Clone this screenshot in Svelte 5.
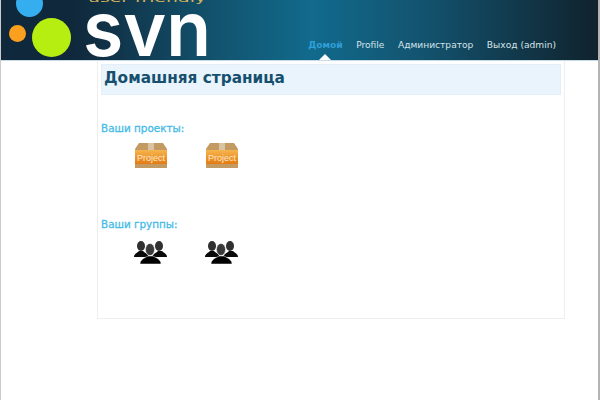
<script>
  const nav = [
    { label: 'Домой', active: true },
    { label: 'Profile' },
    { label: 'Администратор' },
    { label: 'Выход (admin)' }
  ];
  const sections = [
    { title: 'Ваши проекты:', kind: 'project' },
    { title: 'Ваши группы:', kind: 'group' }
  ];
</script>

<div class="page">
  <header>
    <svg class="logo" width="215" height="60" viewBox="0 0 215 60">
      <circle cx="28.5" cy="3.5" r="13.5" fill="#35aef0" />
      <circle cx="16.5" cy="33.5" r="8.5" fill="#fa9f1e" />
      <circle cx="50.5" cy="37.5" r="19.5" fill="#b7ee12" />
      <text class="tagline" x="87" y="2" textLength="118" lengthAdjust="spacingAndGlyphs">user friendly</text>
      <text class="svn" x="82" y="56" textLength="128" lengthAdjust="spacingAndGlyphs">svn</text>
    </svg>
    <nav>
      {#each nav as item}
        <a href="#top" class:active={item.active}>{item.label}</a>
      {/each}
    </nav>
  </header>

  <main>
    <div class="title"><h1>Домашняя страница</h1></div>

    {#each sections as section}
      <section>
        <h2>{section.title}</h2>
        <div class="icons {section.kind}">
          {#each [0, 1] as i (i)}
            <div class="icon">
              {#if section.kind === 'project'}
                <svg width="32" height="25" viewBox="0 0 32 25">
                  <defs>
                    <linearGradient id="band{i}" x1="0" y1="0" x2="0" y2="1">
                      <stop offset="0" stop-color="#f7b54e" />
                      <stop offset="1" stop-color="#e57a12" />
                    </linearGradient>
                  </defs>
                  <path d="M4 0h24l4 6v19H0V6z" fill="#c29a62" />
                  <path d="M13 0h6v7h-6z" fill="#d9c3a2" />
                  <rect y="7" width="32" height="14" fill="url(#band{i})" />
                  <text x="16" y="17.5" class="label" text-anchor="middle">Project</text>
                </svg>
              {:else}
                <svg width="33" height="24" viewBox="0 0 33 24">
                  <g fill="#303030">
                    <ellipse cx="7" cy="5" rx="4" ry="5" />
                    <ellipse cx="25" cy="5" rx="4" ry="5" />
                  </g>
                  <path d="M0 16c0-3 3-4 5-6h4c2 2 5 3 6 6z" fill="#0a0a0a" />
                  <path d="M18 16c1-3 4-4 6-6h4c2 2 5 3 5 6z" fill="#0a0a0a" />
                  <ellipse cx="16" cy="8.5" rx="4.5" ry="6" fill="#3a3a3a" stroke="#fff" stroke-width=".5" />
                  <path d="M6 23c0-4 4-6 8-8h5c4 2 8 4 8 8z" fill="#000" stroke="#fff" stroke-width=".5" />
                </svg>
              {/if}
            </div>
          {/each}
        </div>
      </section>
    {/each}
  </main>
</div>

<style>
  :global(body) {
    margin: 0;
    background: #fff;
  }

  .page {
    box-sizing: border-box;
    width: 600px;
    height: 400px;
    border-left: 1px solid #ccc;
    border-right: 2px solid #b4b4b4;
    font-family: "DejaVu Sans", sans-serif;
    overflow: hidden;
  }

  header {
    display: flex;
    justify-content: space-between;
    align-items: flex-end;
    height: 60px;
    background: linear-gradient(90deg, #10283b 0%, #10283b 12%, #125672 38%, #116a8c 52%, #135470 70%, #10222d 100%);
    border-bottom: 1px solid #c6dbe7;
  }

  .logo {
    display: block;
  }

  .tagline {
    font: 10px "DejaVu Sans", sans-serif;
    fill: #d2b25c;
  }

  .svn {
    font: 600 76px "Inter", sans-serif;
    fill: #fff;
  }

  nav {
    display: flex;
    gap: 13.5px;
    padding-right: 42px;
    padding-bottom: 4px;
  }

  nav a {
    position: relative;
    height: 17px;
    font-size: 9.1px;
    line-height: 13px;
    color: #d5e3ea;
    text-decoration: none;
  }

  nav a.active {
    color: #2f9fd8;
    font-weight: bold;
  }

  nav a.active::after {
    content: '';
    position: absolute;
    left: 50%;
    bottom: -4px;
    margin-left: -6px;
    border: 6px solid transparent;
    border-top: 0;
    border-bottom-color: #fff;
  }

  main {
    box-sizing: border-box;
    width: 468px;
    height: 258px;
    margin-left: 96px;
    padding: 3px;
    border: 1px solid #eee;
    border-top: 0;
  }

  .title {
    box-sizing: border-box;
    height: 31px;
    padding-left: 2px;
    background: #e9f4fc;
    border: 1px solid #e3eef6;
  }

  h1 {
    margin: 0;
    font-size: 15.3px;
    line-height: 26px;
    font-weight: bold;
    color: #17506f;
  }

  section {
    height: 96px;
    padding-top: 26px;
  }

  section + section {
    padding-top: 0;
  }

  h2 {
    margin: 0;
    font-size: 10.4px;
    line-height: 14px;
    font-weight: normal;
    color: #45bbe6;
    -webkit-text-stroke: 0.3px #45bbe6;
  }

  .icons {
    display: flex;
    gap: 39px;
    padding-left: 34px;
    padding-top: 8px;
  }

  .icons.group {
    padding-top: 10px;
    padding-left: 33px;
  }

  .icon {
    width: 32px;
    height: 26px;
  }

  .icon svg {
    display: block;
  }

  .label {
    font: 9px "Liberation Sans", sans-serif;
    fill: #fbe9c8;
  }
</style>
